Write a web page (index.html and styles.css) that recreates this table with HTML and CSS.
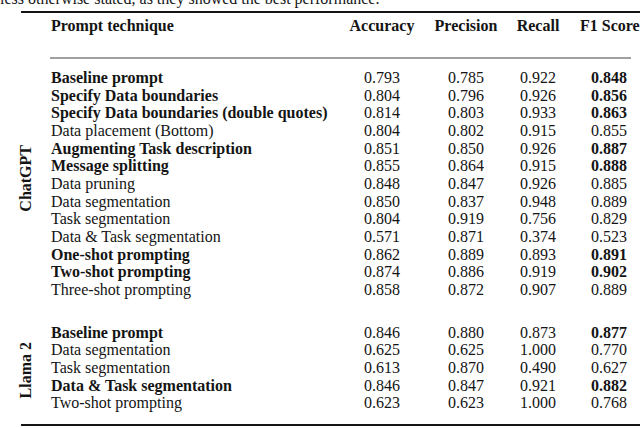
FILE: index.html
```html
<!DOCTYPE html>
<html lang="en">
<head>
<meta charset="utf-8">
<title>Prompt technique results</title>
<link rel="stylesheet" href="styles.css">
</head>
<body>
<p class="caption">less otherwise stated, as they showed the best performance.</p>
<div class="table">
  <div class="grid head">
    <div class="cell label-col"></div>
    <div class="cell tech b">Prompt technique</div>
    <div class="cell num b">Accuracy</div>
    <div class="cell num b">Precision</div>
    <div class="cell num b">Recall</div>
    <div class="cell num f1 b">F1 Score</div>
  </div>
  <div class="midrule"></div>

  <div class="grid group group-chat">
    <div class="group-label chat"><span>ChatGPT</span></div>
    <div class="row"><div class="cell tech b">Baseline prompt</div><div class="cell num">0.793</div><div class="cell num">0.785</div><div class="cell num">0.922</div><div class="cell num f1 b">0.848</div></div>
    <div class="row"><div class="cell tech b">Specify Data boundaries</div><div class="cell num">0.804</div><div class="cell num">0.796</div><div class="cell num">0.926</div><div class="cell num f1 b">0.856</div></div>
    <div class="row"><div class="cell tech b">Specify Data boundaries (double quotes)</div><div class="cell num">0.814</div><div class="cell num">0.803</div><div class="cell num">0.933</div><div class="cell num f1 b">0.863</div></div>
    <div class="row"><div class="cell tech">Data placement (Bottom)</div><div class="cell num">0.804</div><div class="cell num">0.802</div><div class="cell num">0.915</div><div class="cell num f1">0.855</div></div>
    <div class="row"><div class="cell tech b">Augmenting Task description</div><div class="cell num">0.851</div><div class="cell num">0.850</div><div class="cell num">0.926</div><div class="cell num f1 b">0.887</div></div>
    <div class="row"><div class="cell tech b">Message splitting</div><div class="cell num">0.855</div><div class="cell num">0.864</div><div class="cell num">0.915</div><div class="cell num f1 b">0.888</div></div>
    <div class="row"><div class="cell tech">Data pruning</div><div class="cell num">0.848</div><div class="cell num">0.847</div><div class="cell num">0.926</div><div class="cell num f1">0.885</div></div>
    <div class="row"><div class="cell tech">Data segmentation</div><div class="cell num">0.850</div><div class="cell num">0.837</div><div class="cell num">0.948</div><div class="cell num f1">0.889</div></div>
    <div class="row"><div class="cell tech">Task segmentation</div><div class="cell num">0.804</div><div class="cell num">0.919</div><div class="cell num">0.756</div><div class="cell num f1">0.829</div></div>
    <div class="row"><div class="cell tech">Data &amp; Task segmentation</div><div class="cell num">0.571</div><div class="cell num">0.871</div><div class="cell num">0.374</div><div class="cell num f1">0.523</div></div>
    <div class="row"><div class="cell tech b">One-shot prompting</div><div class="cell num">0.862</div><div class="cell num">0.889</div><div class="cell num">0.893</div><div class="cell num f1 b">0.891</div></div>
    <div class="row"><div class="cell tech b">Two-shot prompting</div><div class="cell num">0.874</div><div class="cell num">0.886</div><div class="cell num">0.919</div><div class="cell num f1 b">0.902</div></div>
    <div class="row"><div class="cell tech">Three-shot prompting</div><div class="cell num">0.858</div><div class="cell num">0.872</div><div class="cell num">0.907</div><div class="cell num f1">0.889</div></div>
  </div>

  <div class="grid group group-llama">
    <div class="group-label llama"><span>Llama 2</span></div>
    <div class="row"><div class="cell tech b">Baseline prompt</div><div class="cell num">0.846</div><div class="cell num">0.880</div><div class="cell num">0.873</div><div class="cell num f1 b">0.877</div></div>
    <div class="row"><div class="cell tech">Data segmentation</div><div class="cell num">0.625</div><div class="cell num">0.625</div><div class="cell num">1.000</div><div class="cell num f1">0.770</div></div>
    <div class="row"><div class="cell tech">Task segmentation</div><div class="cell num">0.613</div><div class="cell num">0.870</div><div class="cell num">0.490</div><div class="cell num f1">0.627</div></div>
    <div class="row"><div class="cell tech b">Data &amp; Task segmentation</div><div class="cell num">0.846</div><div class="cell num">0.847</div><div class="cell num">0.921</div><div class="cell num f1 b">0.882</div></div>
    <div class="row"><div class="cell tech">Two-shot prompting</div><div class="cell num">0.623</div><div class="cell num">0.623</div><div class="cell num">1.000</div><div class="cell num f1">0.768</div></div>
  </div>
</div>
</body>
</html>
```
FILE: styles.css
```css
html {
  margin: 0;
  padding: 0;
  background: #ffffff;
  overflow: hidden;
}
body {
  margin: 0;
  padding: 0;
  width: 640px;
  font-family: "Liberation Serif", "Times New Roman", serif;
  font-size: 16px;
  color: #141414;
  display: flow-root;
}
.caption {
  margin: -10px 0 0 0;
  line-height: 18px;
  white-space: nowrap;
}
.table {
  margin: 3px 0 0 21px;
  width: 619px;
  border-top: 2px solid #141414;
  border-bottom: 2px solid #141414;
  padding-bottom: 12px;
}
.midrule {
  margin: 22px 0 0 29px;
  width: 581px;
  height: 2px;
  background: #a0a0a0;
}
.grid {
  display: grid;
  grid-template-columns: 30px 289px 84px 84px 60px 70px;
  grid-auto-rows: 17.7px;
  line-height: 17.7px;
}
.head {
  padding-top: 4.2px;
}
.row {
  display: contents;
}
.cell {
  white-space: nowrap;
}
.row .tech {
  grid-column: 2;
}
.num {
  text-align: center;
}
.f1 {
  padding-left: 12px;
}
.b {
  font-weight: bold;
}
.group-chat {
  margin-top: 10px;
}
.group-llama {
  margin-top: 24.9px;
}
.group-label {
  grid-column: 1;
  display: flex;
  align-items: center;
  justify-content: flex-start;
}
.group-label span {
  writing-mode: vertical-rl;
  transform: rotate(180deg);
  font-weight: bold;
  line-height: 10px;
  white-space: nowrap;
}
.chat {
  grid-row: 1 / span 13;
  padding-bottom: 11px;
}
.llama {
  grid-row: 1 / span 5;
  padding-top: 5px;
}
```
